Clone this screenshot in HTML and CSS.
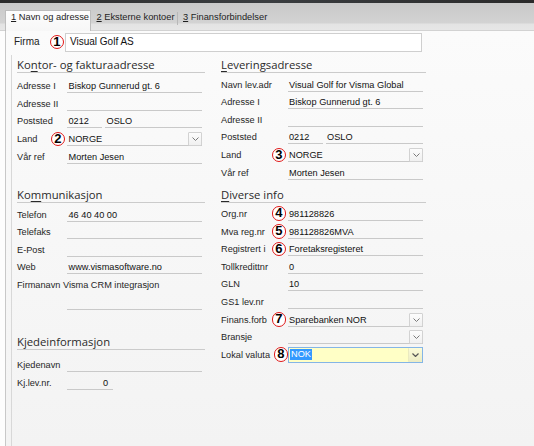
FILE: index.html
```html
<!DOCTYPE html>
<html>
<head>
<meta charset="utf-8">
<link rel="stylesheet" href="styles.css">
</head>
<body>
<div class="topbar"></div>
<div class="tabbar">
  <div class="tab tab1 active"><u>1</u> Navn og adresse</div>
  <div class="tab tab2"><u>2</u> Eksterne kontoer</div>
  <div class="tabsep"></div>
  <div class="tab tab3"><u>3</u> Finansforbindelser</div>
</div>
<div class="page">
  <div class="firma">
    <span class="firma-label">Firma</span>
    <div class="firma-input"><span class="mark">1</span>Visual Golf AS</div>
  </div>
  <div class="inner">
    <div class="col col-left">
      <section class="sec sec-kontor">
        <h2 class="head">Ko<u>n</u>tor- og fakturaadresse</h2>
        <div class="rows">
          <div class="row"><span class="lbl">Adresse I</span><span class="fld">Biskop Gunnerud gt. 6</span></div>
          <div class="row"><span class="lbl">Adresse II</span><span class="fld"></span></div>
          <div class="row"><span class="lbl">Poststed</span><span class="fld zip">0212</span><span class="fld city">OSLO</span></div>
          <div class="row"><span class="lbl">Land</span><span class="fld combo"><span class="mark">2</span>NORGE<span class="btn"><svg width="7" height="4" viewBox="0 0 7 4"><path d="M0.5 0.5 L3.5 3.5 L6.5 0.5" fill="none" stroke="#7a7a7a" stroke-width="1"/></svg></span></span></div>
          <div class="row"><span class="lbl">Vår ref</span><span class="fld">Morten Jesen</span></div>
        </div>
      </section>
      <section class="sec sec-komm">
        <h2 class="head">Ko<u>m</u>munikasjon</h2>
        <div class="rows">
          <div class="row"><span class="lbl">Telefon</span><span class="fld">46 40 40 00</span></div>
          <div class="row"><span class="lbl">Telefaks</span><span class="fld"></span></div>
          <div class="row"><span class="lbl">E-Post</span><span class="fld"></span></div>
          <div class="row"><span class="lbl">Web</span><span class="fld">www.vismasoftware.no</span></div>
          <div class="row"><span class="lbl wide">Firmanavn Visma CRM integrasjon</span></div>
          <div class="row"><span class="lbl"></span><span class="fld"></span></div>
        </div>
      </section>
      <section class="sec sec-kjede">
        <h2 class="head">Kjedeinformasjon</h2>
        <div class="rows">
          <div class="row"><span class="lbl">Kjedenavn</span><span class="fld"></span></div>
          <div class="row"><span class="lbl">Kj.lev.nr.</span><span class="fld short">0</span></div>
        </div>
      </section>
    </div>
    <div class="col col-right">
      <section class="sec sec-lev">
        <h2 class="head"><u>L</u>everingsadresse</h2>
        <div class="rows">
          <div class="row"><span class="lbl">Navn lev.adr</span><span class="fld">Visual Golf for Visma Global</span></div>
          <div class="row"><span class="lbl">Adresse I</span><span class="fld">Biskop Gunnerud gt. 6</span></div>
          <div class="row"><span class="lbl">Adresse II</span><span class="fld"></span></div>
          <div class="row"><span class="lbl">Poststed</span><span class="fld zip">0212</span><span class="fld city">OSLO</span></div>
          <div class="row"><span class="lbl">Land</span><span class="fld combo"><span class="mark">3</span>NORGE<span class="btn"><svg width="7" height="4" viewBox="0 0 7 4"><path d="M0.5 0.5 L3.5 3.5 L6.5 0.5" fill="none" stroke="#7a7a7a" stroke-width="1"/></svg></span></span></div>
          <div class="row"><span class="lbl">Vår ref</span><span class="fld">Morten Jesen</span></div>
        </div>
      </section>
      <section class="sec sec-div">
        <h2 class="head"><u>D</u>iverse info</h2>
        <div class="rows">
          <div class="row"><span class="lbl">Org.nr</span><span class="fld"><span class="mark">4</span>981128826</span></div>
          <div class="row"><span class="lbl">Mva reg.nr</span><span class="fld"><span class="mark">5</span>981128826MVA</span></div>
          <div class="row"><span class="lbl">Registrert i</span><span class="fld"><span class="mark">6</span>Foretaksregisteret</span></div>
          <div class="row"><span class="lbl">Tollkredittnr</span><span class="fld">0</span></div>
          <div class="row"><span class="lbl">GLN</span><span class="fld">10</span></div>
          <div class="row"><span class="lbl">GS1 lev.nr</span><span class="fld"></span></div>
          <div class="row"><span class="lbl">Finans.forb</span><span class="fld combo"><span class="mark">7</span>Sparebanken NOR<span class="btn"><svg width="7" height="4" viewBox="0 0 7 4"><path d="M0.5 0.5 L3.5 3.5 L6.5 0.5" fill="none" stroke="#7a7a7a" stroke-width="1"/></svg></span></span></div>
          <div class="row"><span class="lbl">Bransje</span><span class="fld combo"><span class="btn"><svg width="7" height="4" viewBox="0 0 7 4"><path d="M0.5 0.5 L3.5 3.5 L6.5 0.5" fill="none" stroke="#7a7a7a" stroke-width="1"/></svg></span></span></div>
          <div class="row"><span class="lbl">Lokal valuta</span><span class="fld combo active-combo"><span class="mark">8</span><span class="selected">NOK</span><span class="btn"><svg width="7" height="4" viewBox="0 0 7 4"><path d="M0.5 0.5 L3.5 3.5 L6.5 0.5" fill="none" stroke="#555" stroke-width="1.2"/></svg></span></span></div>
        </div>
      </section>
    </div>
  </div>
</div>
</body>
</html>
```

FILE: styles.css
```css
* { box-sizing: border-box; margin: 0; padding: 0; }
html, body { width: 534px; height: 446px; overflow: hidden; }
body {
  background: #fdfdfd;
  font-family: "Liberation Sans", Arial, sans-serif;
  font-size: 9.2px;
  color: #222;
}
u { text-decoration: underline; text-underline-offset: 1px; text-decoration-thickness: 1px; }

.topbar { height: 3px; background: linear-gradient(90deg, #2c2c2c, #3a3d40 50%, #2a2a2a); }

.tabbar {
  height: 28px;
  display: flex;
  align-items: flex-start;
  padding: 7px 0 0 5px;
  background: linear-gradient(#c9c9c9, #d3d3d3 20px, #e3e3e3 21px, #e6e6e6);
  border-bottom: 1px solid #d2d2d2;
}
.tab {
  height: 20px;
  padding: 1px 0 0 5px;
  font-size: 9.3px;
  line-height: 12px;
  color: #1e1e1e;
  white-space: nowrap;
}
.tab.active {
  height: 21px;
  padding-top: 0;
  background: linear-gradient(#fdfdfd, #f7f7f7);
  border: 1px solid #bdbdbd;
  border-bottom: none;
}
.tab1 { width: 86px; }
.tab2 { width: 86px; padding-left: 5.5px; }
.tabsep { width: 1px; height: 13px; margin-top: 2px; background: #b8b8b8; }
.tab3 { padding-left: 5px; }

.page {
  height: 415px;
  margin-left: 5px;
  border-left: 1px solid #c8c8c8;
  background: linear-gradient(#fbfbfb, #f3f3f3);
}

.firma {
  height: 24px;
  display: flex;
  align-items: flex-start;
  padding: 2px 0 0 8px;
}
.firma-label { width: 51px; font-size: 10px; line-height: 18.5px; color: #222; }
.firma-input {
  position: relative;
  width: 357px;
  height: 18.5px;
  border: 1px solid #cfcfcf;
  background: #fff;
  padding-left: 4px;
  font-size: 10px;
  line-height: 16.5px;
  color: #111;
}

.inner {
  height: 391px;
  margin-left: 5px;
  border-left: 1px solid #d8d8d8;
  padding: 3.3px 0 0 5px;
  display: flex;
  gap: 16px;
}
.col-left { width: 188px; }
.col-right { width: 205px; }

.head {
  height: 15px;
  font-family: "Open Sans", "Liberation Sans", sans-serif;
  font-weight: 400;
  font-size: 11.3px;
  line-height: 14px;
  color: #2a2a2a;
  border-bottom: 1px solid #cbcbcb;
  white-space: nowrap;
}
.head u { text-underline-offset: 1.5px; }

.sec-kontor .rows { margin-top: 2.4px; }
.sec-komm { margin-top: 24.6px; }
.sec-komm .rows { margin-top: 0.8px; }
.sec-kjede { margin-top: 25.5px; }
.sec-kjede .rows { margin-top: 4.5px; }
.sec-lev .rows { margin-top: 0.8px; }
.sec-div { margin-top: 8px; }
.sec-div .rows { margin-top: 0.7px; }

.row {
  height: 17.6px;
  display: flex;
  align-items: flex-end;
}
.lbl {
  flex: none;
  line-height: 12px;
  margin-bottom: 1px;
  color: #262626;
  white-space: nowrap;
}
.col-left .lbl { width: 50px; }
.col-right .lbl { width: 67px; }
.lbl.wide { width: auto; }

.fld {
  position: relative;
  width: 135px;
  height: 13px;
  border-bottom: 1px solid #c9c9c9;
  line-height: 12px;
  padding-left: 1.5px;
  color: #111;
  white-space: nowrap;
}
.col-right .fld { padding-left: 1px; }
.fld.zip { width: 35px; margin-right: 3px; }
.fld.city { width: 97px; }
.fld.short { width: 46px; text-align: right; padding-right: 5px; }

.btn {
  position: absolute;
  right: 0;
  bottom: -1px;
  width: 14px;
  height: 14px;
  border: 1px solid #d2d2d2;
  border-radius: 1px;
  background: linear-gradient(#fcfcfc, #f0f0f0);
  display: flex;
  align-items: center;
  justify-content: center;
}

.active-combo {
  height: 16px;
  margin-bottom: -1px;
  border: 1px solid #84b5e6;
  background: #ffffc6;
  padding-left: 2px;
  line-height: 14px;
}
.active-combo .btn {
  top: 0;
  bottom: 0;
  right: 0;
  height: auto;
  border: none;
  border-left: 1px solid #eaeac0;
  background: linear-gradient(#fbfbd8, #ececc4);
}
.selected {
  display: inline-block;
  background: #3399ff;
  color: #fff;
  line-height: 11px;
  padding: 0 1px;
  vertical-align: middle;
  margin-top: -1px;
}

.mark {
  position: absolute;
  right: calc(100% + 2px);
  top: 50%;
  margin-top: -7.5px;
  width: 14.5px;
  height: 14.5px;
  border: 1.5px solid #e01818;
  border-radius: 50%;
  background: #fff;
  color: #000;
  font-family: "Liberation Sans", Arial, sans-serif;
  font-weight: 700;
  font-size: 13px;
  line-height: 11.5px;
  text-align: center;
}
.firma-input .mark { right: calc(100% + 2px); }
.active-combo .mark { right: calc(100% + 1px); }
```
